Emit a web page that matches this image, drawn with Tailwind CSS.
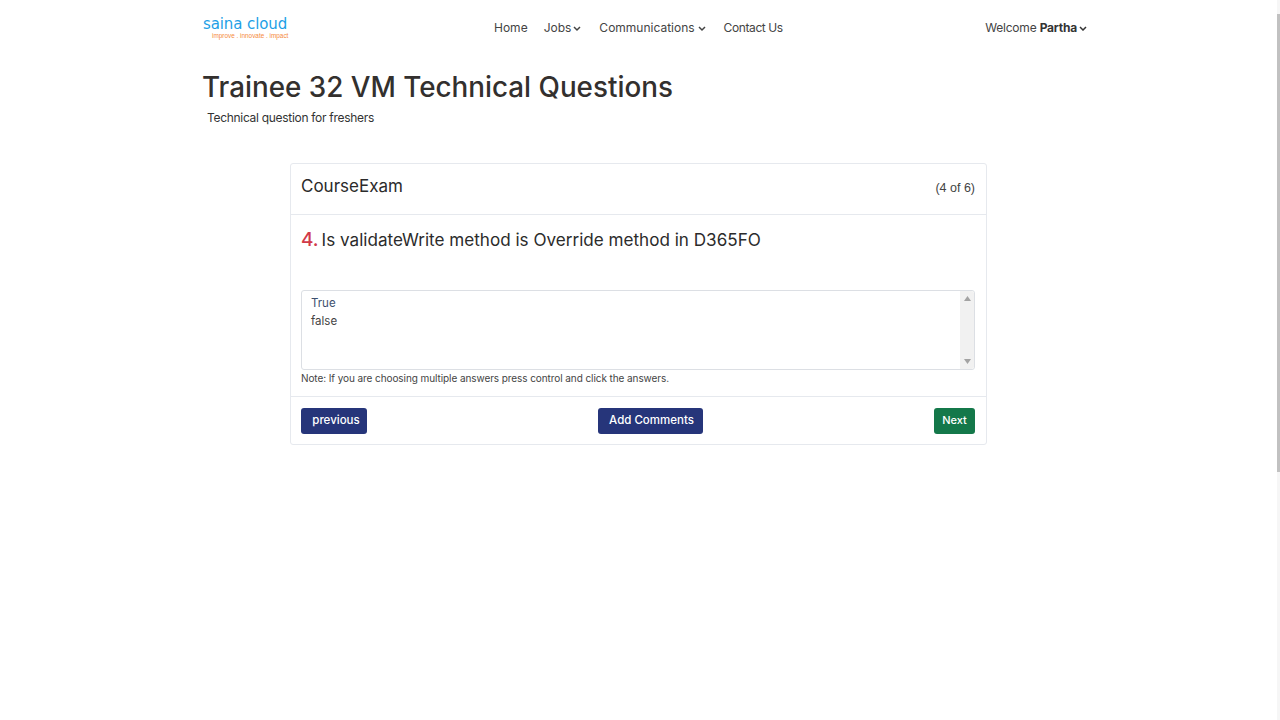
<!DOCTYPE html>
<html lang="en">
<head>
    <meta charset="UTF-8">
    <meta name="viewport" content="width=device-width, initial-scale=1.0">
    <title>Trainee 32 VM Technical Questions</title>
    <script src="https://cdn.jsdelivr.net/npm/@tailwindcss/browser@4"></script>
</head>
<body class="bg-white h-[720px] overflow-hidden font-['Inter',sans-serif] text-[#333]">
    <div class="flex h-full">
        <div class="flex-1 min-w-0">
            <!-- Navigation -->
            <nav class="relative ml-[203px] w-[884px] h-[56px] flex items-center justify-between text-[12px] text-[#444]">
                <div class="w-[86px] leading-none">
                    <div class="font-['DejaVu_Sans',sans-serif] text-[15px] leading-[15px] -tracking-[0.1px] text-[#1e9fe6] whitespace-nowrap">saina cloud</div>
                    <div class="font-['Liberation_Sans',sans-serif] text-[6.4px] leading-[7px] pl-[9px] text-[#f58a3c] whitespace-nowrap">improve . innovate . impact</div>
                </div>
                <div class="absolute left-[291px] flex items-center">
                    <a class="mr-[16px]" href="#">Home</a>
                    <a class="flex items-center mr-[18px]" href="#">Jobs
                        <svg class="ml-[2px] mt-px" width="8" height="6" viewBox="0 0 8 6" fill="none" stroke="#444" stroke-width="1.5"><path d="M1 1l3 3 3-3"/></svg>
                    </a>
                    <a class="flex items-center mr-[18px]" href="#">Communications
                        <svg class="ml-[3px] mt-px" width="8" height="6" viewBox="0 0 8 6" fill="none" stroke="#444" stroke-width="1.5"><path d="M1 1l3 3 3-3"/></svg>
                    </a>
                    <a class="tracking-[-0.4px]" href="#">Contact Us</a>
                </div>
                <div class="flex items-center ml-auto tracking-[-0.2px]">
                    <span>Welcome&nbsp;</span><span class="font-bold text-[#333]">Partha</span>
                    <svg class="ml-[2px] mt-px" width="8" height="5" viewBox="0 0 8 5" fill="none" stroke="#333" stroke-width="1.5"><path d="M1 1l3 3 3-3"/></svg>
                </div>
            </nav>

            <!-- Page title -->
            <div class="ml-[202px] pt-[11px]">
                <h1 class="text-[27.8px] leading-[40px] font-medium text-[#33302e]">Trainee 32 VM Technical Questions</h1>
                <p class="ml-[5px] mt-[2px] text-[12px] leading-[18px] tracking-[-0.3px] text-[#333]">Technical question for freshers</p>
            </div>

            <!-- Exam card -->
            <div class="ml-[290px] mt-[36px] w-[697px] h-[282px] border border-[#e6e9ee] rounded-[3px] flex flex-col">
                <div class="h-[51px] pl-[10px] pr-[11px] flex items-center justify-between border-b border-[#e6e9ee]">
                    <h2 class="text-[17px] text-[#2b2b2b] -mt-[5px]">CourseExam</h2>
                    <span class="font-['Liberation_Sans',sans-serif] text-[12.5px] text-[#444] -mt-px">(4 of 6)</span>
                </div>
                <div class="flex-1 pl-[10px] pr-[11px] pt-[11px]">
                    <div class="flex items-baseline h-[27px]">
                        <span class="text-[19px] font-medium text-[#d13a4a] mr-[3px]">4.</span>
                        <span class="text-[17.1px] text-[#2b2b2b]">Is validateWrite method is Override method in D365FO</span>
                    </div>
                    <div class="mt-[37px] h-[80px] border border-[#dcdfe4] rounded-[3px] flex">
                        <div class="flex-1 pl-[9px] pt-[3px] text-[11.5px] leading-[18px] text-[#444]">
                            <div class="text-[#3d4f6e]">True</div>
                            <div>false</div>
                        </div>
                        <div class="w-[14px] bg-[#f1f1f1] flex flex-col items-center justify-between py-[5px] rounded-r-[3px]">
                            <svg width="7" height="5" viewBox="0 0 7 5" fill="#a3a3a3"><path d="M3.5 0L7 5H0z"/></svg>
                            <svg width="7" height="5" viewBox="0 0 7 5" fill="#a3a3a3"><path d="M0 0h7L3.5 5z"/></svg>
                        </div>
                    </div>
                    <p class="mt-px text-[10px] leading-[15px] tracking-[-0.08px] text-[#444]">Note: If you are choosing multiple answers press control and click the answers.</p>
                </div>
                <div class="h-[48px] pl-[10px] pr-[11px] border-t border-[#e6e9ee] flex items-center justify-between">
                    <button class="w-[66px] h-[26px] rounded-[3px] bg-[#26357a] text-white text-[11.5px] font-medium pl-[4px]">previous</button>
                    <button class="w-[105px] h-[26px] rounded-[3px] bg-[#26357a] text-white text-[11.5px] font-medium pl-[2px]">Add Comments</button>
                    <button class="w-[41px] h-[26px] rounded-[3px] bg-[#14784a] text-white text-[11px] font-medium">Next</button>
                </div>
            </div>
        </div>

        <!-- Scrollbar -->
        <div class="w-[3px] h-full bg-[#f6f6f6]">
            <div class="w-full h-[458px] mt-[14px] bg-[#c1c1c1]"></div>
        </div>
    </div>
</body>
</html>
